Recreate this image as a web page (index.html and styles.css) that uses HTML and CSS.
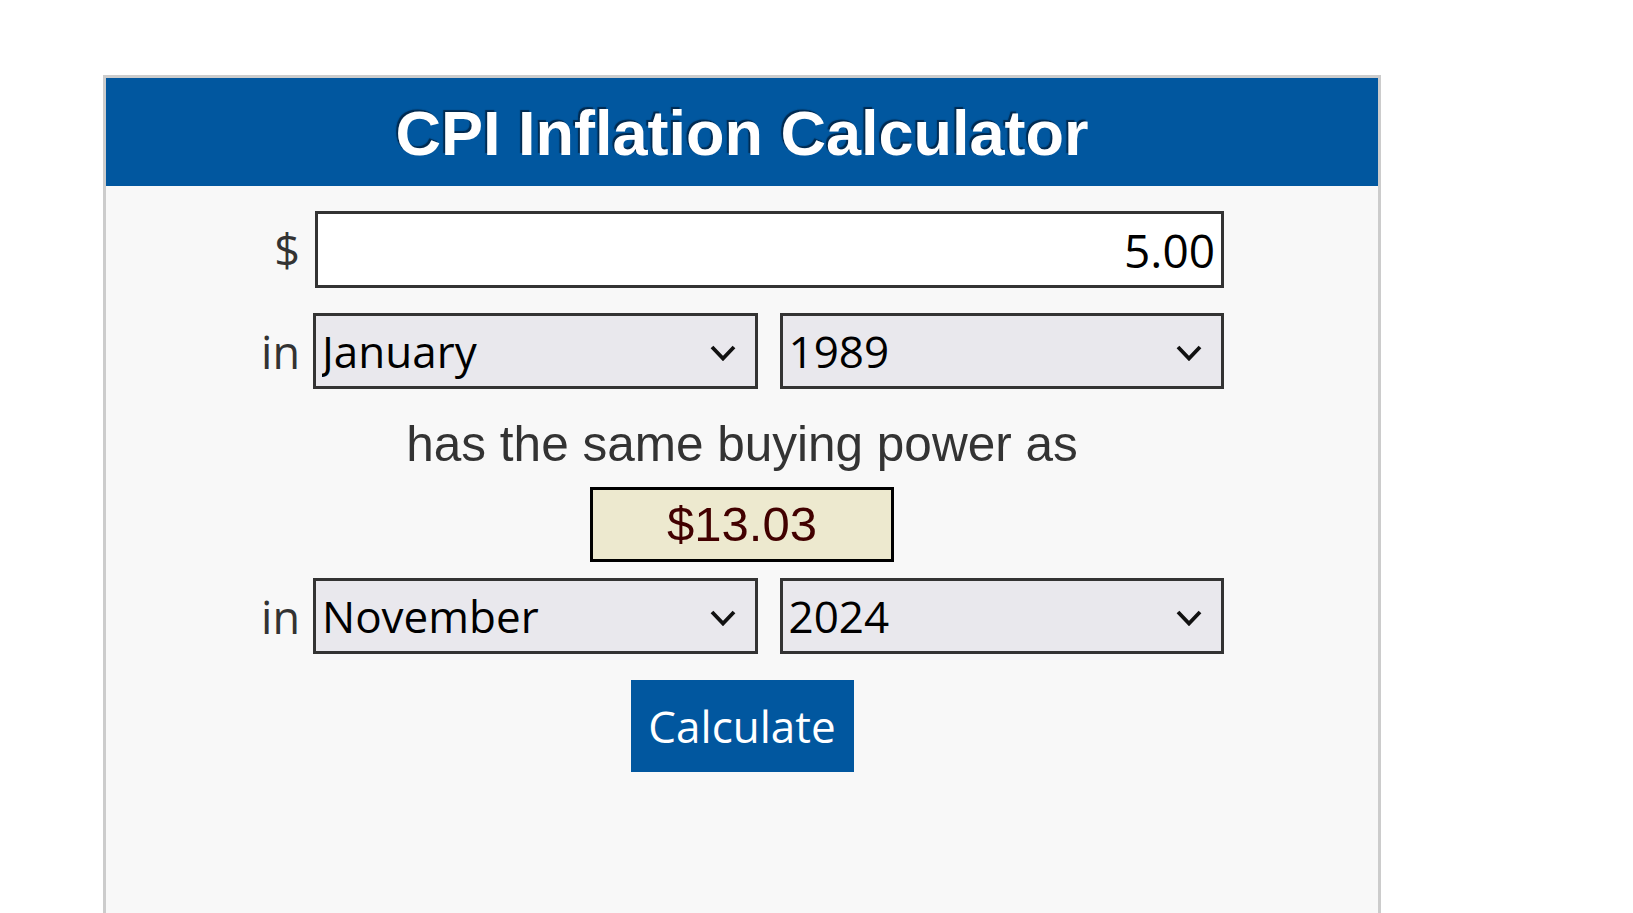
FILE: index.html
```html
<!DOCTYPE html>
<html lang="en">
<head>
    <meta charset="UTF-8">
    <meta name="viewport" content="width=device-width, initial-scale=1.0">
    <title>CPI Inflation Calculator</title>
    <link rel="stylesheet" href="styles.css">
</head>
<body>
    <div class="calc">
        <h1 class="calc-title">CPI Inflation Calculator</h1>
        <form class="calc-form" id="calc-form">
            <div class="row">
                <label class="row-label" for="amount">$</label>
                <input type="text" id="amount" class="amount" value="5.00">
            </div>
            <div class="row">
                <span class="row-label">in</span>
                <div class="pair">
                    <div class="pick">
                        <select id="month1" class="month"></select>
                        <svg class="chev" viewBox="0 0 26 16"><path d="M2 2 L13 13.5 L24 2"/></svg>
                    </div>
                    <div class="pick">
                        <select id="year1" class="year"></select>
                        <svg class="chev" viewBox="0 0 26 16"><path d="M2 2 L13 13.5 L24 2"/></svg>
                    </div>
                </div>
            </div>
            <p class="same">has the same buying power as</p>
            <div class="result" id="result">$13.03</div>
            <div class="row row-last">
                <span class="row-label">in</span>
                <div class="pair">
                    <div class="pick">
                        <select id="month2" class="month"></select>
                        <svg class="chev" viewBox="0 0 26 16"><path d="M2 2 L13 13.5 L24 2"/></svg>
                    </div>
                    <div class="pick">
                        <select id="year2" class="year"></select>
                        <svg class="chev" viewBox="0 0 26 16"><path d="M2 2 L13 13.5 L24 2"/></svg>
                    </div>
                </div>
            </div>
            <button type="submit" class="calc-btn">Calculate</button>
        </form>
    </div>

    <script>
        const months = ['January', 'February', 'March', 'April', 'May', 'June',
            'July', 'August', 'September', 'October', 'November', 'December'];

        function fill(id, items, selected) {
            const sel = document.getElementById(id);
            items.forEach(item => {
                const opt = document.createElement('option');
                opt.textContent = item;
                if (String(item) === String(selected)) opt.selected = true;
                sel.appendChild(opt);
            });
        }

        const years = [];
        for (let y = 2024; y >= 1913; y--) years.push(y);

        fill('month1', months, 'January');
        fill('year1', years, 1989);
        fill('month2', months, 'November');
        fill('year2', years, 2024);

        document.getElementById('calc-form').addEventListener('submit', (e) => {
            e.preventDefault(); // no CPI table offline, keep the last result
        });
    </script>
</body>
</html>
```

FILE: styles.css
```css
body {
    margin: 0;
    padding: 0;
    background: #fff;
    font-family: "Liberation Sans", Arial, sans-serif;
}
.calc {
    box-sizing: border-box;
    width: 1278px;
    min-height: calc(100vh - 75px);
    margin: 75px 0 0 103px;
    border: 3px solid #ccc;
    border-bottom: 0;
    background: #f8f8f8;
}
.calc-title {
    margin: 0;
    height: 108px;
    padding-top: 2px;
    box-sizing: border-box;
    line-height: 106px;
    background: #01579f;
    color: #fff;
    text-align: center;
    font-size: 63px;
    font-weight: 700;
    text-shadow: -2px -2px 1px #012a50;
}
.calc-form {
    display: flex;
    flex-direction: column;
    align-items: center;
    padding-top: 25px;
}
.row {
    display: grid;
    grid-template-columns: 40px 911px;
    column-gap: 13px;
    align-items: center;
    width: 964px;
}
.row + .row {
    margin-top: 25px;
}
.row-last {
    margin-top: 16px;
}
.row-label {
    text-align: right;
    font-family: "Open Sans", "Noto Sans", sans-serif;
    font-size: 45px;
    color: #333;
}
.amount {
    box-sizing: border-box;
    width: 909px;
    height: 77px;
    margin: 0 0 0 2px;
    padding: 0 6px;
    border: 3px solid #333;
    border-radius: 0;
    background: #fff;
    font-family: "Open Sans", "Noto Sans", sans-serif;
    font-size: 46px;
    color: #000;
    text-align: right;
    outline: none;
}
.pair {
    display: grid;
    grid-template-columns: 1fr 1fr;
    column-gap: 22px;
}
.pick {
    position: relative;
}
.pick select {
    appearance: none;
    -webkit-appearance: none;
    box-sizing: border-box;
    width: 100%;
    height: 76px;
    margin: 0;
    padding: 0 6px;
    border: 3px solid #333;
    border-radius: 0;
    background: #e9e8ed;
    font-family: "Open Sans", "Noto Sans", sans-serif;
    font-size: 44px;
    color: #000;
    outline: none;
}
.chev {
    position: absolute;
    top: 32px;
    right: 22px;
    width: 26px;
    height: 16px;
    pointer-events: none;
    fill: none;
    stroke: #111;
    stroke-width: 3.8;
}
.same {
    margin: 27px 0 0;
    font-size: 49.5px;
    line-height: 56px;
    color: #333;
}
.result {
    box-sizing: border-box;
    width: 304px;
    height: 75px;
    margin-top: 15px;
    border: 3px solid #000;
    background: #ede9cf;
    color: #420000;
    font-size: 49px;
    line-height: 69px;
    text-align: center;
}
.calc-btn {
    width: 223px;
    height: 92px;
    margin-top: 26px;
    padding: 0;
    border: none;
    border-radius: 0;
    background: #01579f;
    color: #fff;
    font-family: "Open Sans", "Noto Sans", sans-serif;
    font-size: 44px;
    cursor: pointer;
}
```
